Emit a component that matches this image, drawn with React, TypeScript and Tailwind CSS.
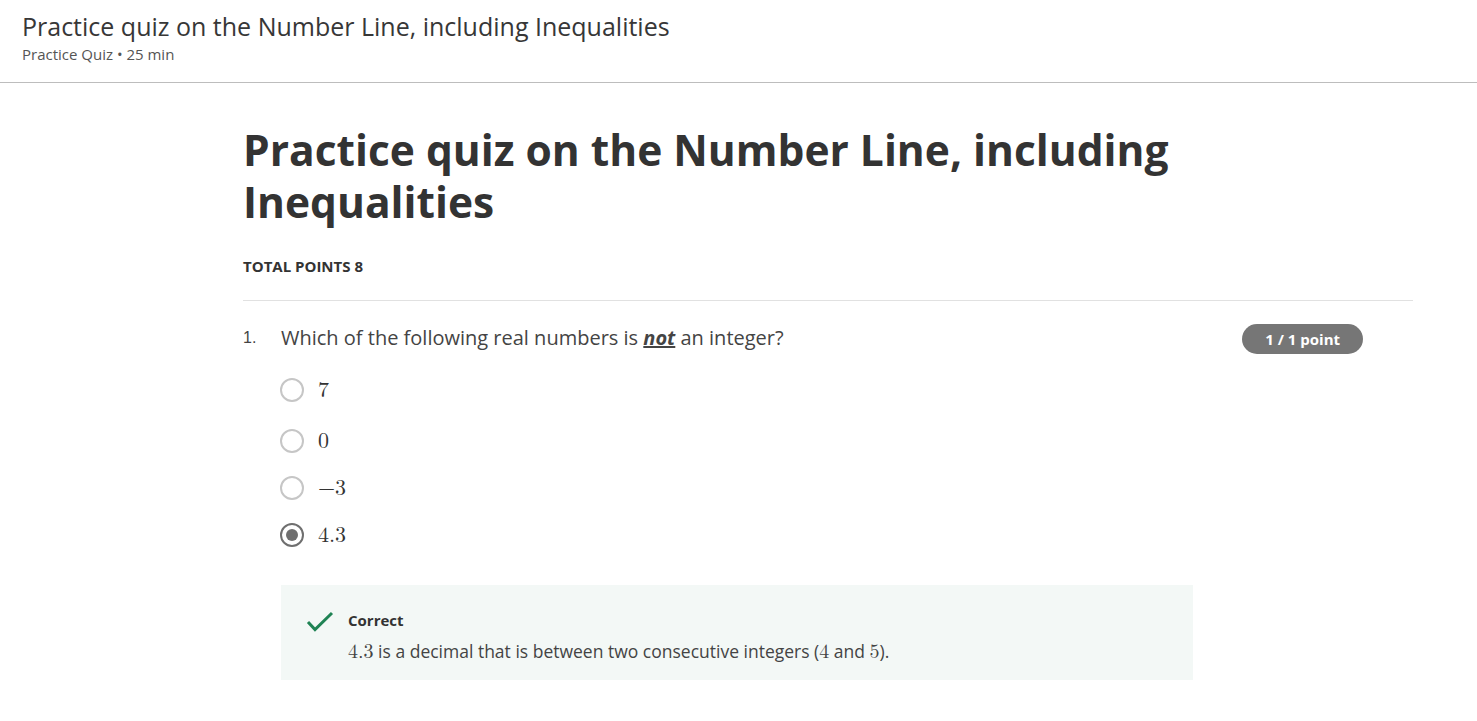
import React from 'react';

const options = [
  { label: '7', checked: false },
  { label: '0', checked: false },
  { label: '\u22123', checked: false },
  { label: '4.3', checked: true },
];

const math = "font-['Latin_Modern_Math','Liberation_Serif',serif]";

function Radio({ checked }: { checked: boolean }) {
  if (checked) {
    return (
      <span className="flex h-[24px] w-[24px] items-center justify-center rounded-full border-[2px] border-[#6f6f6f]">
        <span className="h-[12px] w-[12px] rounded-full bg-[#6f6f6f]" />
      </span>
    );
  }
  return <span className="h-[24px] w-[24px] rounded-full border-[2px] border-[#c6c6c6]" />;
}

export default function App() {
  return (
    <div className="min-h-screen bg-white font-['Open_Sans',sans-serif] text-[#373737]">
      <header className="h-[83px] border-b border-[#bdbdbd] px-[22px] pt-[9px]">
        <h1 className="text-[25px] leading-[34px] text-[#373737]">
          Practice quiz on the Number Line, including Inequalities
        </h1>
        <p className="mt-[1px] text-[15px] leading-[20px] text-[#555]">Practice Quiz • 25 min</p>
      </header>

      <main className="ml-[243px] mr-[64px] pt-[41px]">
        <h2 className="text-[42.5px] font-bold leading-[52px] text-[#333]">
          Practice quiz on the Number Line, including
          <br />
          Inequalities
        </h2>
        <div className="mt-[28px] text-[15px] font-bold leading-[20px] text-[#333]">TOTAL POINTS 8</div>
        <div className="mt-[24px] border-t border-[#e1e1e1]" />

        <section className="mt-[22px]">
          <div className="flex items-start">
            <span className="w-[38px] pt-[2px] font-['Liberation_Sans',sans-serif] text-[16px] leading-[26px] text-[#444]">1.</span>
            <p className="flex-1 text-[20px] leading-[30px] text-[#444]">
              Which of the following real numbers is{' '}
              <strong className="font-bold italic underline">not</strong> an integer?
            </p>
            <span className="mr-[50px] mt-[1px] rounded-full bg-[#767676] px-[23px] text-[15px] font-bold leading-[30px] text-white">
              1 / 1 point
            </span>
          </div>

          <div className="ml-[37px] mt-[16px] flex flex-col">
            {options.map((o, i) => (
              <div key={i} className={'flex items-center gap-[14px] ' + (i === 0 ? 'h-[40px]' : i === 1 ? 'mt-[11px] h-[40px]' : 'mt-[7px] h-[40px]')}>
                <Radio checked={o.checked} />
                <span className={math + ' text-[22px] leading-[30px] text-[#333]'}>{o.label}</span>
              </div>
            ))}
          </div>

          <div className="ml-[38px] mt-[30px] flex w-[912px] gap-[14px] bg-[#f3f8f6] px-[25px] pb-[15px] pt-[25px]">
            <svg width="28" height="22" viewBox="0 0 28 22" className="mt-[1px] shrink-0">
              <path d="M2 11 L9 18.5 L26 2" fill="none" stroke="#1f8354" strokeWidth="3" />
            </svg>
            <div>
              <div className="text-[15px] font-bold leading-[20px] text-[#333]">Correct</div>
              <p className="mt-[8px] text-[17.5px] leading-[26px] text-[#444]">
                <span className={math + ' text-[20px]'}>4.3</span> is a decimal that is between two consecutive integers (
                <span className={math + ' text-[20px]'}>4</span> and <span className={math + ' text-[20px]'}>5</span>).
              </p>
            </div>
          </div>
        </section>
      </main>
    </div>
  );
}
